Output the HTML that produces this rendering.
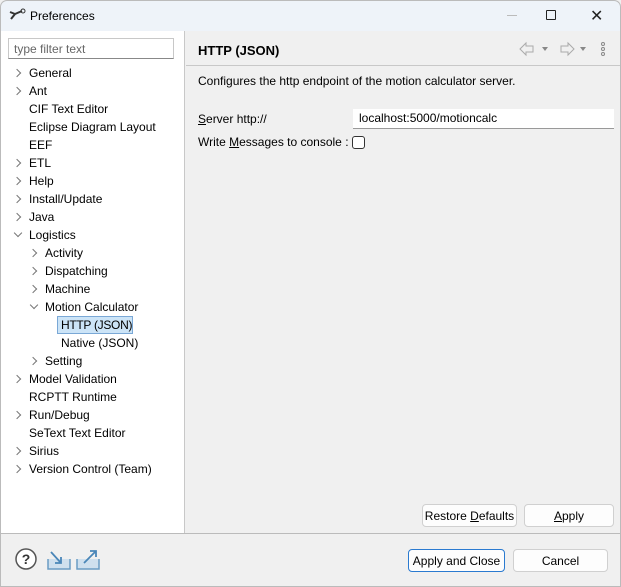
<!DOCTYPE html>
<html><head><meta charset="utf-8"><style>
*{box-sizing:border-box}
body{margin:0;width:621px;height:587px;overflow:hidden;font-family:"Segoe UI","Liberation Sans",sans-serif;font-size:12px;color:#000;background:#f0f0f0;position:relative}
.abs{position:absolute}
.title{left:0;top:0;width:621px;height:31px;background:#eef3f9;border:1px solid #bbb;border-bottom:none;border-radius:7px 7px 0 0}
.left{left:1px;top:31px;width:184px;height:502px;background:#fff;border-right:1px solid #c8c8c8}
.filter{left:8px;top:38px;width:166px;height:21px;border:1px solid #c8c8c8;border-bottom:1px solid #888;color:#666;padding:3px 5px;font-size:12px}
.row{position:absolute;height:18px;line-height:18px;white-space:nowrap}
.arr{position:absolute;width:6px;height:6px;border-right:1.3px solid #777;border-bottom:1.3px solid #777}
.r{transform:rotate(-45deg)}
.d{transform:rotate(45deg)}
.btn{position:absolute;height:23px;background:#fdfdfd;border:1px solid #d0d0d0;border-radius:4px;text-align:center;line-height:22px}
u{text-decoration:underline}
</style></head><body>
<div class="abs title"></div>
<svg class="abs" style="left:8px;top:8px" width="18" height="14" viewBox="0 0 18 14"><path d="M2 4 L7 6 L3 11 M7 6 L14 3" stroke="#333" stroke-width="2" fill="none"/><circle cx="15" cy="3" r="2" fill="none" stroke="#333"/></svg>
<div class="abs" style="left:30px;top:9px;font-size:12px">Preferences</div>
<div class="abs" style="left:507px;top:15px;width:10px;height:1px;background:#bbb"></div>
<div class="abs" style="left:546px;top:10px;width:10px;height:10px;border:1.3px solid #222;border-radius:1px"></div>
<div class="abs" style="left:590px;top:6px;font-size:16px;color:#222">✕</div>
<div class="abs" style="left:0;top:31px;width:621px;height:556px;border:1px solid #bbb;border-top:none;pointer-events:none"></div>
<div class="abs left"></div>
<div class="abs filter">type filter text</div>
<div id="tree"></div>
<div class="abs" style="left:198px;top:43px;font-weight:bold;font-size:13px">HTTP (JSON)</div>
<svg class="abs" style="left:518px;top:41px" width="95" height="16" viewBox="0 0 95 16"><path d="M2 8 L8 2 L8 5 L15 5 L15 11 L8 11 L8 14 Z" fill="none" stroke="#aaa"/><path d="M24 6 L30 6 L27 10Z" fill="#888"/><path d="M56 8 L50 2 L50 5 L43 5 L43 11 L50 11 L50 14 Z" fill="none" stroke="#aaa"/><path d="M62 6 L68 6 L65 10Z" fill="#888"/><circle cx="85" cy="3" r="1.5" fill="none" stroke="#888"/><circle cx="85" cy="8" r="1.5" fill="none" stroke="#888"/><circle cx="85" cy="13" r="1.5" fill="none" stroke="#888"/></svg>
<div class="abs" style="left:186px;top:65px;width:434px;height:1px;background:#c8c8c8"></div>
<div class="abs" style="left:198px;top:74px">Configures the http endpoint of the motion calculator server.</div>
<div class="abs" style="left:198px;top:112px"><u>S</u>erver http://</div>
<div class="abs" style="left:353px;top:109px;width:261px;height:20px;background:#fff;border-bottom:1px solid #999;padding:2px 6px">localhost:5000/motioncalc</div>
<div class="abs" style="left:198px;top:135px">Write <u>M</u>essages to console :</div>
<div class="abs" style="left:352px;top:136px;width:13px;height:13px;border:1px solid #333;border-radius:3px;background:#fff"></div>
<div class="btn" style="left:422px;top:504px;width:95px">Restore <u>D</u>efaults</div>
<div class="btn" style="left:524px;top:504px;width:90px"><u>A</u>pply</div>
<div class="abs" style="left:1px;top:533px;width:619px;height:1px;background:#bbb"></div>
<svg class="abs" style="left:14px;top:547px" width="90" height="24" viewBox="0 0 90 24"><circle cx="12" cy="12" r="10" fill="#fff" stroke="#555" stroke-width="1.5"/><text x="12" y="17" font-size="14" text-anchor="middle" fill="#333" font-family="Liberation Sans" font-weight="bold">?</text><path d="M34 12 L34 22 L56 22 L56 12" fill="#cfe0ee" stroke="#6a9cc4" stroke-width="1.5"/><path d="M37 5 L47 16 M47 10 L47 16 L41 16" stroke="#4a86b8" stroke-width="1.8" fill="none"/><path d="M63 12 L63 22 L85 22 L85 12" fill="#cfe0ee" stroke="#6a9cc4" stroke-width="1.5"/><path d="M70 16 L82 4 M76 4 L82 4 L82 10" stroke="#4a86b8" stroke-width="1.8" fill="none"/></svg>
<div class="btn" style="left:408px;top:549px;width:97px;border:1px solid #2a7ad0">Apply and Close</div>
<div class="btn" style="left:513px;top:549px;width:95px">Cancel</div>
<script>
var items=[["General",0,"r"],["Ant",0,"r"],["CIF Text Editor",0],["Eclipse Diagram Layout",0],["EEF",0],["ETL",0,"r"],["Help",0,"r"],["Install/Update",0,"r"],["Java",0,"r"],["Logistics",0,"d"],["Activity",1,"r"],["Dispatching",1,"r"],["Machine",1,"r"],["Motion Calculator",1,"d"],["HTTP (JSON)",2,"s"],["Native (JSON)",2],["Setting",1,"r"],["Model Validation",0,"r"],["RCPTT Runtime",0],["Run/Debug",0,"r"],["SeText Text Editor",0],["Sirius",0,"r"],["Version Control (Team)",0,"r"]];
var h="";items.forEach(function(it,i){var y=64+i*18,x=29+it[1]*16;
if(it[2]=="r")h+='<div class="arr r" style="left:'+(x-15)+'px;top:'+(y+6)+'px"></div>';
if(it[2]=="d")h+='<div class="arr d" style="left:'+(x-14)+'px;top:'+(y+4)+'px"></div>';
if(it[2]=="s")h+='<div class="row" style="left:'+(x-4)+'px;top:'+y+'px;width:76px;background:#cce4f7;border:1px solid #7aa8d6;padding:0 3px;line-height:16px;letter-spacing:-0.3px">'+it[0]+'</div>';
else h+='<div class="row" style="left:'+x+'px;top:'+y+'px">'+it[0]+'</div>';});
document.getElementById("tree").innerHTML=h;
</script>
</body></html>
